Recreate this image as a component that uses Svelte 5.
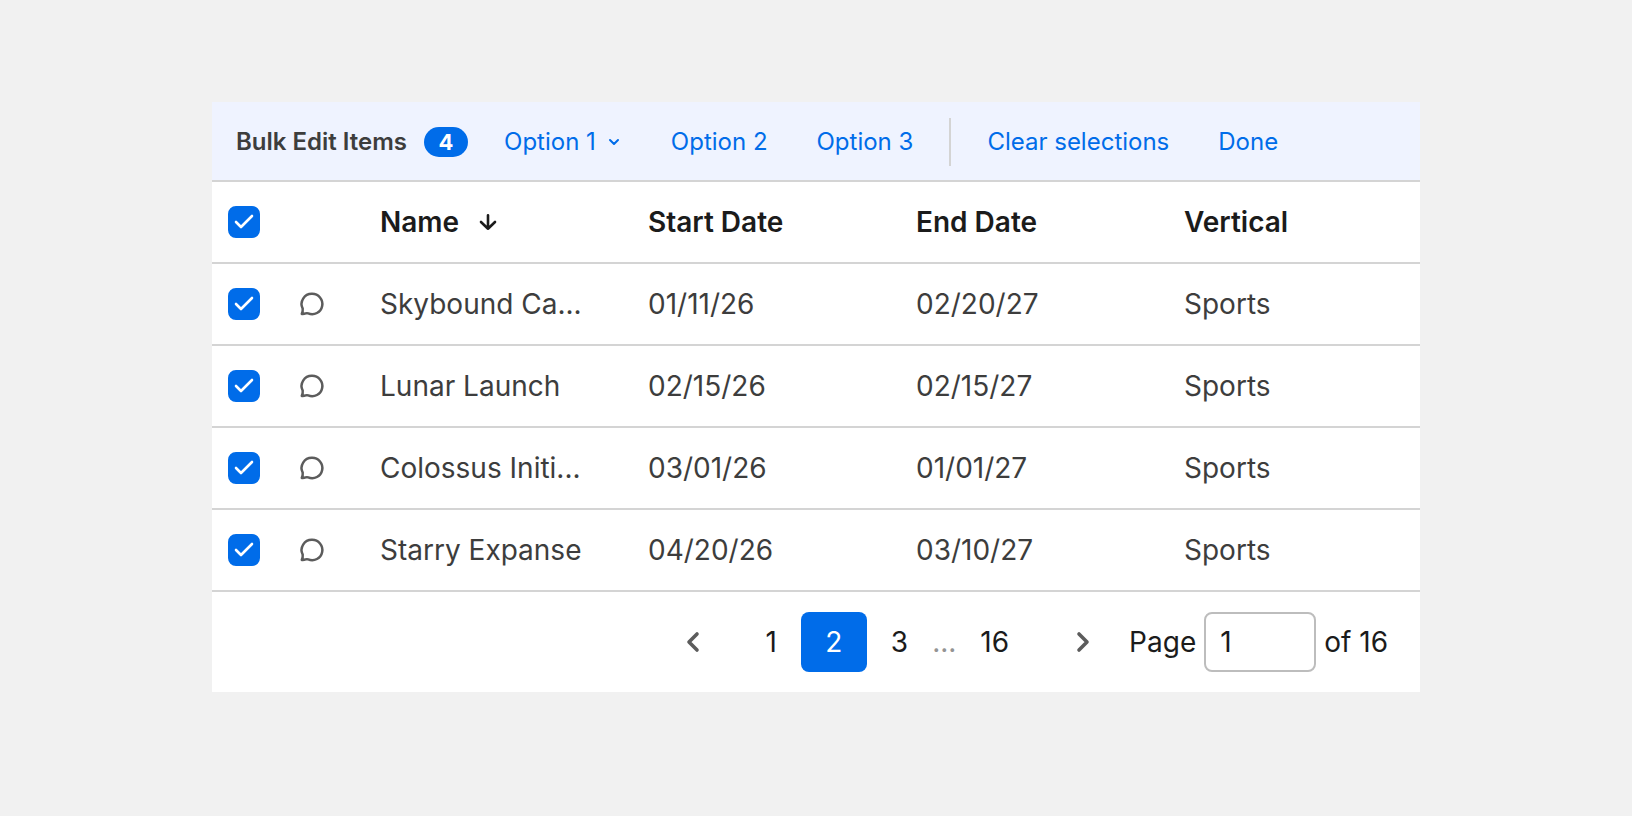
<script>
  const campaigns = [
    { name: "Skybound Ca...", start: "01/11/26", end: "02/20/27", vertical: "Sports" },
    { name: "Lunar Launch", start: "02/15/26", end: "02/15/27", vertical: "Sports" },
    { name: "Colossus Initi...", start: "03/01/26", end: "01/01/27", vertical: "Sports" },
    { name: "Starry Expanse", start: "04/20/26", end: "03/10/27", vertical: "Sports" },
  ];

  let selected = $state([true, true, true, true]);
  let currentPage = $state(2);
  let pageInput = $state("1");

  let selectedCount = $derived(selected.filter(Boolean).length);
  let allSelected = $derived(selectedCount === campaigns.length);

  function toggleAll() {
    const next = !allSelected;
    selected = campaigns.map(() => next);
  }

  function clearSelections() {
    selected = campaigns.map(() => false);
  }

  function goTo(page) {
    currentPage = Math.min(16, Math.max(1, page));
  }
</script>

{#snippet tick()}
  <svg class="tick" width="32" height="32" viewBox="0 0 32 32" aria-hidden="true">
    <path d="M8 16 L13 21 L24 10" />
  </svg>
{/snippet}

{#snippet pageButton(page)}
  <button
    class="page-btn"
    class:page-btn--current={page === currentPage}
    aria-current={page === currentPage ? "page" : undefined}
    onclick={() => goTo(page)}>{page}</button>
{/snippet}

<main class="panel">
  <div class="toolbar">
    <span class="toolbar-title">Bulk Edit Items</span>
    <span class="badge">{selectedCount}</span>
    <div class="actions">
      <button class="action">
        Option 1
        <svg width="16" height="16" viewBox="0 0 16 16" aria-hidden="true">
          <path d="M4 6 L8 10 L12 6" />
        </svg>
      </button>
      <button class="action">Option 2</button>
      <button class="action">Option 3</button>
    </div>
    <span class="divider"></span>
    <div class="actions">
      <button class="action" onclick={clearSelections}>Clear selections</button>
      <button class="action">Done</button>
    </div>
  </div>

  <table>
    <colgroup>
      <col class="col-check" />
      <col class="col-comment" />
      <col class="col-data" />
      <col class="col-data" />
      <col class="col-data" />
      <col />
    </colgroup>
    <thead>
      <tr>
        <th>
          <label class="checkbox">
            <input type="checkbox" aria-label="Select all" checked={allSelected} onchange={toggleAll} />
            {@render tick()}
          </label>
        </th>
        <td></td>
        <th scope="col" aria-sort="descending">
          <button class="sort">
            Name
            <svg width="24" height="24" viewBox="0 0 24 24" aria-hidden="true">
              <path d="M12 5.3 V18.7 M5 12 L12 18.7 L19 12" />
            </svg>
          </button>
        </th>
        <th scope="col">Start Date</th>
        <th scope="col">End Date</th>
        <th scope="col">Vertical</th>
      </tr>
    </thead>
    <tbody>
      {#each campaigns as campaign, i}
        <tr>
          <td>
            <label class="checkbox">
              <input type="checkbox" aria-label="Select {campaign.name}" bind:checked={selected[i]} />
              {@render tick()}
            </label>
          </td>
          <td>
            <button class="comment" aria-label="Comments">
              <svg width="32" height="32" viewBox="0 0 32 32" aria-hidden="true">
                <path d="M16 5.8 A10.2 10.2 0 1 1 12.2 25.4 Q10.9 24.9 9.6 25.4 Q7.9 26.1 5.8 25.9 Q7 23.6 6.7 20.6 A10.2 10.2 0 0 1 16 5.8 Z" />
              </svg>
            </button>
          </td>
          <td>{campaign.name}</td>
          <td>{campaign.start}</td>
          <td>{campaign.end}</td>
          <td>{campaign.vertical}</td>
        </tr>
      {/each}
    </tbody>
  </table>

  <nav class="pagination" aria-label="Pagination">
    <button class="arrow" aria-label="Previous page" onclick={() => goTo(currentPage - 1)}>
      <svg width="32" height="32" viewBox="0 0 32 32" aria-hidden="true">
        <path d="M20 8 L12 16 L20 24" />
      </svg>
    </button>
    <div class="pages">
      {@render pageButton(1)}
      {@render pageButton(2)}
      {@render pageButton(3)}
      <span class="ellipsis">...</span>
      {@render pageButton(16)}
    </div>
    <button class="arrow" aria-label="Next page" onclick={() => goTo(currentPage + 1)}>
      <svg width="32" height="32" viewBox="0 0 32 32" aria-hidden="true">
        <path d="M12 8 L20 16 L12 24" />
      </svg>
    </button>
    <div class="jump">
      <label for="page-number">Page</label>
      <input id="page-number" type="text" inputmode="numeric" bind:value={pageInput} />
      <span>of 16</span>
    </div>
  </nav>
</main>

<style>
  :global(body) {
    background: #f1f1f1;
  }

  .panel {
    max-width: 1208px;
    margin: 102px auto;
    background: #ffffff;
    color: #3d3d3d;
    font-family: Inter, "Liberation Sans", sans-serif;
    font-size: 28px;
    line-height: 36px;
  }

  button {
    border: none;
    padding: 0;
    background: none;
    font: inherit;
    color: inherit;
    cursor: pointer;
  }

  svg {
    display: block;
    fill: none;
    stroke: currentColor;
    stroke-width: 2;
    stroke-linecap: round;
    stroke-linejoin: round;
  }

  .toolbar {
    display: flex;
    align-items: center;
    box-sizing: border-box;
    min-height: 80px;
    padding: 2px 24px 0;
    background: #eff3ff;
    border-bottom: 2px solid #d4d4d4;
    font-size: 24px;
    line-height: 32px;
    white-space: nowrap;
  }

  .toolbar-title {
    font-weight: 600;
  }

  .badge {
    min-width: 44px;
    margin: 0 12px 0 17px;
    border-radius: 15px;
    background: #006ce9;
    color: #ffffff;
    font-size: 22px;
    font-weight: 700;
    line-height: 30px;
    text-align: center;
  }

  .actions {
    display: flex;
    gap: 1px;
  }

  .action {
    display: flex;
    align-items: center;
    gap: 10px;
    padding: 0 24px;
    color: #006ce9;
  }

  .divider {
    width: 2px;
    height: 48px;
    margin: 0 12px;
    background: #d4d4d4;
  }

  table {
    width: 100%;
    table-layout: fixed;
    border-collapse: separate;
    border-spacing: 0;
  }

  .col-check {
    width: 64px;
  }

  .col-comment {
    width: 88px;
  }

  .col-data {
    width: 268px;
  }

  th,
  td {
    box-sizing: border-box;
    height: 82px;
    padding: 0 16px;
    border-bottom: 2px solid #d4d4d4;
    text-align: left;
    white-space: nowrap;
  }

  th {
    color: #1b1b1b;
    font-weight: 600;
  }

  .checkbox {
    display: grid;
    width: 32px;
    height: 32px;
  }

  .checkbox input {
    grid-area: 1 / 1;
    appearance: none;
    width: 32px;
    height: 32px;
    margin: 0;
    border: 2px solid #bdbdbd;
    border-radius: 8px;
  }

  .checkbox input:checked {
    background: #006ce9;
    border-color: #006ce9;
  }

  .tick {
    grid-area: 1 / 1;
    color: #ffffff;
    stroke-width: 2.6;
    pointer-events: none;
  }

  .sort {
    display: flex;
    align-items: center;
    gap: 17px;
  }

  .sort svg {
    stroke-width: 2.6;
  }

  .comment {
    display: block;
    padding: 0 4px;
    color: #5c5c5c;
  }

  .comment svg {
    stroke-width: 2.5;
  }

  .pagination {
    display: flex;
    align-items: center;
    justify-content: flex-end;
    gap: 16px;
    padding: 20px 32px;
    color: #1b1b1b;
  }

  .pages {
    display: flex;
    align-items: center;
    padding: 0 4px 0 2px;
  }

  .page-btn {
    height: 60px;
    padding: 0 24px;
    border-radius: 8px;
  }

  .page-btn--current {
    min-width: 66px;
    background: #006ce9;
    color: #ffffff;
  }

  .ellipsis {
    color: #949494;
  }

  .arrow {
    display: grid;
    place-items: center;
    width: 60px;
    height: 60px;
    color: #5c5c5c;
  }

  .arrow svg {
    stroke-width: 3.6;
  }

  .jump {
    display: flex;
    align-items: center;
    gap: 8px;
  }

  .jump input {
    box-sizing: border-box;
    width: 112px;
    height: 60px;
    padding: 0 14px;
    border: 2px solid #bdbdbd;
    border-radius: 8px;
    background: #ffffff;
    color: inherit;
    font: inherit;
  }
</style>
